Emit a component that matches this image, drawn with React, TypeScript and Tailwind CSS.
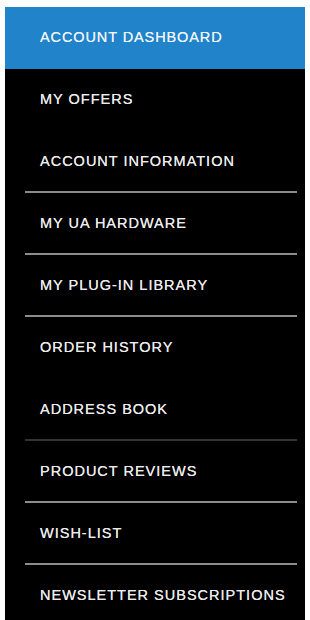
const ITEMS = [
  { label: 'MY OFFERS', line: 'none' },
  { label: 'ACCOUNT INFORMATION', line: 'light' },
  { label: 'MY UA HARDWARE', line: 'light' },
  { label: 'MY PLUG-IN LIBRARY', line: 'light' },
  { label: 'ORDER HISTORY', line: 'none' },
  { label: 'ADDRESS BOOK', line: 'dark' },
  { label: 'PRODUCT REVIEWS', line: 'light' },
  { label: 'WISH-LIST', line: 'light' },
  { label: 'NEWSLETTER SUBSCRIPTIONS', line: 'none' },
];

export default function App() {
  return (
    <div className="min-h-[620px] bg-white px-[5px] pt-[7px] font-['Liberation_Sans',Arial,sans-serif]">
      <div className="bg-black pb-[2px]">
        {/* active item */}
        <div className="h-[62px] bg-[#2183c9] flex items-center pl-[35px] text-[14.5px] text-[#eef4fa] tracking-[0.9px] [text-shadow:0_0_0.4px_#eef4fa]">
          ACCOUNT DASHBOARD
        </div>

        {ITEMS.map((item) => (
          <div key={item.label}>
            <div className="h-[60px] flex items-center pl-[35px] pt-[2px] text-[14.5px] text-[#ebebeb] tracking-[1px] [text-shadow:0_0_0.4px_#ebebeb]">
              {item.label}
            </div>
            <div
              className={
                item.line === 'light'
                  ? 'ml-[20px] mr-[8px] h-[2px] bg-[#8c8c8c]'
                  : item.line === 'dark'
                  ? 'ml-[20px] mr-[8px] h-[2px] bg-[#333333]'
                  : 'h-[2px]'
              }
            />
          </div>
        ))}
      </div>
    </div>
  );
}
